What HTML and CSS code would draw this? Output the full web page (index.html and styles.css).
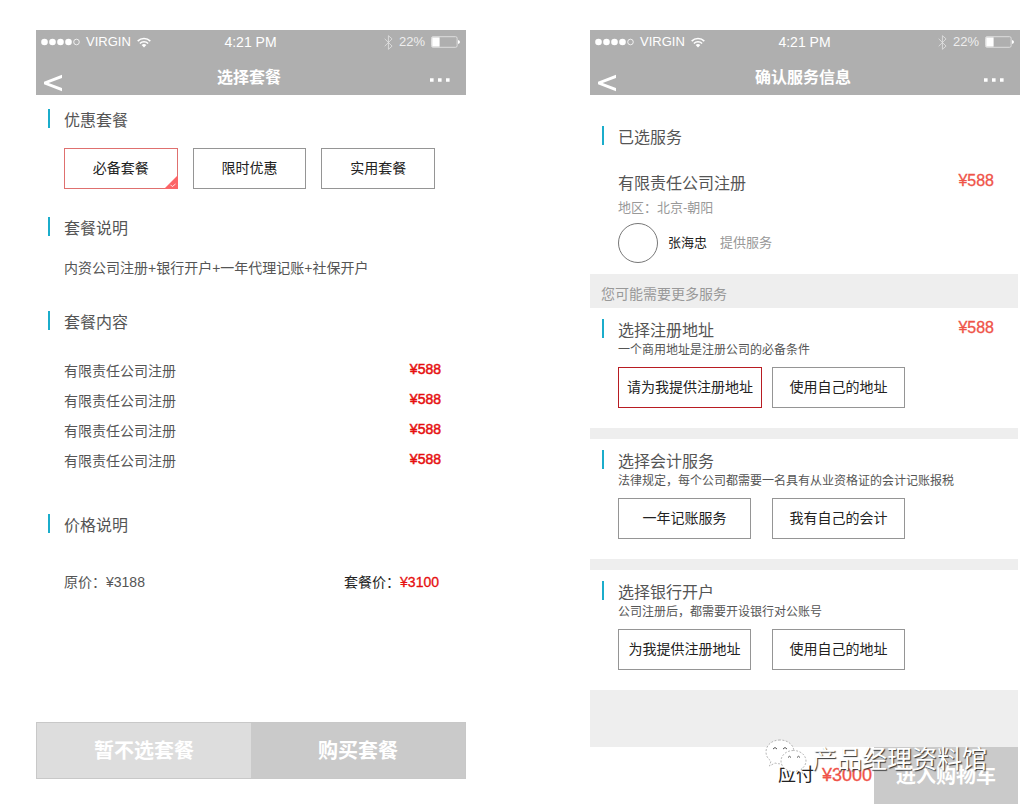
FILE: index.html
```html
<!DOCTYPE html>
<html lang="zh-CN">
<head>
  <meta charset="UTF-8" />
  <meta name="viewport" content="width=device-width, initial-scale=1.0" />
  <title>选择套餐</title>
  <link rel="stylesheet" href="styles.css">
</head>
<body>
<svg class="sprite" aria-hidden="true">
  <symbol id="signal" viewBox="0 0 39 8">
    <circle cx="3.5" cy="4" r="3.3" fill="#fff"/>
    <circle cx="11.5" cy="4" r="3.3" fill="#fff"/>
    <circle cx="19.5" cy="4" r="3.3" fill="#fff"/>
    <circle cx="27.5" cy="4" r="3.3" fill="#fff"/>
    <circle cx="35.5" cy="4" r="2.8" fill="none" stroke="#fff" stroke-width="0.8"/>
  </symbol>
  <symbol id="wifi" viewBox="0 0 14 11">
    <path d="M0.7 4.100a9 9 0 0 1 12.600 0M2.900 6.500a5.800 5.800 0 0 1 8.200 0" fill="none" stroke="#fff" stroke-width="1.6"/>
    <path d="M4.600 8.100a3.400 3.400 0 0 1 4.800 0L7 10.600z" fill="#fff"/>
  </symbol>
  <symbol id="bluetooth" viewBox="0 0 9 15">
    <path d="M0.7 3.8l7.4 7.3-3.7 3.2V0.7l3.7 3.2-7.4 7.3" fill="none" stroke="#e4e4e4" stroke-width="0.8"/>
  </symbol>
  <symbol id="battery" viewBox="0 0 29 12">
    <rect x="0.5" y="0.7" width="25.6" height="10.6" rx="1.5" fill="none" stroke="#ddd"/>
    <rect x="1.2" y="1.4" width="7.4" height="9.2" fill="#fff"/>
    <path d="M27 4q2 .4 2 2t-2 2z" fill="#fff"/>
  </symbol>
  <symbol id="back" viewBox="0 0 20 24">
    <path d="M19 3.800v3.200L5.600 12 19 17v3.200L1 13.300v-2.600z" fill="#fff"/>
  </symbol>
  <symbol id="more" viewBox="0 0 20 30">
    <path d="M0 13.2h3.6v3.6H0zM8 13.2h3.6v3.6H8zM16 13.2h3.6v3.6H16z" fill="#fff"/>
  </symbol>
</svg>

<main class="screens">
  <section class="screen">
    <header class="topbar">
      <div class="status">
        <span class="carrier">
          <svg width="39" height="8"><use href="#signal"/></svg>
          VIRGIN
          <svg width="14" height="11"><use href="#wifi"/></svg>
        </span>
        <span class="time">4:21 PM</span>
        <span class="power">
          <svg width="9" height="15"><use href="#bluetooth"/></svg>
          22%
          <svg width="29" height="12"><use href="#battery"/></svg>
        </span>
      </div>
      <nav class="nav">
        <button class="nav-back" aria-label="返回"><svg width="20" height="24"><use href="#back"/></svg></button>
        <h1>选择套餐</h1>
        <button class="nav-more" aria-label="更多"><svg width="20" height="30"><use href="#more"/></svg></button>
      </nav>
    </header>

    <div class="plan">
      <h2 class="heading">优惠套餐</h2>
      <div class="plan-options">
        <button class="option picked">必备套餐
          <svg class="corner" width="14" height="14" viewBox="0 0 14 14">
            <path d="M14 0v14H0z" fill="#fb6567"/>
            <path d="M6.5 9.8l1.8 1.8 3.2-2.6" fill="none" stroke="#fff" stroke-width="0.8"/>
          </svg>
        </button>
        <button class="option">限时优惠</button>
        <button class="option">实用套餐</button>
      </div>

      <h2 class="heading">套餐说明</h2>
      <p class="plan-text">内资公司注册+银行开户+一年代理记账+社保开户</p>

      <h2 class="heading">套餐内容</h2>
      <ul class="plan-items">
        <li>有限责任公司注册 <b>¥588</b></li>
        <li>有限责任公司注册 <b>¥588</b></li>
        <li>有限责任公司注册 <b>¥588</b></li>
        <li>有限责任公司注册 <b>¥588</b></li>
      </ul>

      <h2 class="heading">价格说明</h2>
      <div class="plan-total">
        <span>原价：¥3188</span>
        <span class="sale">套餐价：<em>¥3100</em></span>
      </div>
    </div>

    <footer class="plan-footer">
      <button class="skip">暂不选套餐</button>
      <button class="buy">购买套餐</button>
    </footer>
  </section>

  <section class="screen">
    <header class="topbar">
      <div class="status">
        <span class="carrier">
          <svg width="39" height="8"><use href="#signal"/></svg>
          VIRGIN
          <svg width="14" height="11"><use href="#wifi"/></svg>
        </span>
        <span class="time">4:21 PM</span>
        <span class="power">
          <svg width="9" height="15"><use href="#bluetooth"/></svg>
          22%
          <svg width="29" height="12"><use href="#battery"/></svg>
        </span>
      </div>
      <nav class="nav">
        <button class="nav-back" aria-label="返回"><svg width="20" height="24"><use href="#back"/></svg></button>
        <h1>确认服务信息</h1>
        <button class="nav-more" aria-label="更多"><svg width="20" height="30"><use href="#more"/></svg></button>
      </nav>
    </header>

    <div class="confirm">
      <section class="chosen">
        <h2 class="heading">已选服务</h2>
        <div class="chosen-row">
          <h3>有限责任公司注册</h3>
          <span class="price">¥588</span>
        </div>
        <p class="area">地区：北京-朝阳</p>
        <div class="provider">
          <span class="avatar"></span>
          <span class="name">张海忠</span>
          <span>提供服务</span>
        </div>
      </section>

      <p class="more-title">您可能需要更多服务</p>

      <section class="service">
        <div class="service-head">
          <h2 class="heading">选择注册地址</h2>
          <span class="price">¥588</span>
        </div>
        <p class="desc">一个商用地址是注册公司的必备条件</p>
        <div class="service-options">
          <button class="option active">请为我提供注册地址</button>
          <button class="option">使用自己的地址</button>
        </div>
      </section>

      <section class="service">
        <h2 class="heading">选择会计服务</h2>
        <p class="desc">法律规定，每个公司都需要一名具有从业资格证的会计记账报税</p>
        <div class="service-options">
          <button class="option">一年记账服务</button>
          <button class="option">我有自己的会计</button>
        </div>
      </section>

      <section class="service">
        <h2 class="heading">选择银行开户</h2>
        <p class="desc">公司注册后，都需要开设银行对公账号</p>
        <div class="service-options">
          <button class="option">为我提供注册地址</button>
          <button class="option">使用自己的地址</button>
        </div>
      </section>

      <div class="spacer"></div>

      <footer class="pay">
        <span class="pay-label">应付</span>
        <span class="pay-sum">¥3000</span>
        <button class="cart">进入购物车</button>
        <div class="watermark">
          <svg width="42" height="36" viewBox="0 0 42 36">
            <g fill="#fff" stroke="#999" stroke-width="0.7" stroke-dasharray="2 1.5">
              <path d="M15 1C7 1 1 6.200 1 13c0 4 2 7 5 9l-1.500 5 5.500-3c2 .6 3.500.8 5 .8 8 0 14-5 14-11.800S23 1 15 1z"/>
              <path d="M28.500 11.500c-7 0-12.500 4.600-12.500 10.500s5.500 10.500 12.500 10.500c1.500 0 3-.2 4.300-.7l4.700 2.700-1.300-4.300c2.900-2 4.800-4.900 4.800-8.200 0-5.900-5.600-10.500-12.500-10.500z"/>
            </g>
            <path d="M8 10q2-3 4 0M18 10q2-3 4 0M23 18.500q1.500-2.500 3 0M32 18.500q1.500-2.500 3 0" fill="none" stroke="#555"/>
          </svg>
          <span>产品经理资料馆</span>
        </div>
      </footer>
    </div>
  </section>
</main>
</body>
</html>
```

FILE: styles.css
```css
* {
  box-sizing: border-box;
}
body {
  margin: 0;
  background: #fff;
  color: #555;
  font-family: "Liberation Sans", "Noto Sans CJK SC", sans-serif;
  font-size: 14px;
  line-height: 22px;
}
h1, h2, h3, p, ul {
  margin: 0;
  padding: 0;
  font-weight: normal;
}
button {
  margin: 0;
  padding: 0;
  border: none;
  background: none;
  font-family: inherit;
  cursor: pointer;
}
.sprite {
  display: none;
}
.screens {
  display: grid;
  grid-template-columns: 1fr 1fr;
  gap: 124px;
  padding: 30px 0 0 36px;
}

/* top bar */
.topbar {
  background: #afafaf;
  color: #fff;
}
.status, .nav {
  display: grid;
  grid-template-columns: 1fr auto 1fr;
}
.status {
  align-items: center;
  height: 24px;
  padding: 0 6px 0 5px;
  font-size: 13px;
}
.carrier, .power {
  display: flex;
  align-items: center;
  gap: 6px;
}
.power {
  justify-content: flex-end;
  color: #eee;
}
.time {
  font-size: 14px;
}
.nav {
  padding: 6px 11px 0 7px;
  align-items: end;
}
.nav h1 {
  font-size: 16px;
  font-weight: bold;
  line-height: 35px;
}
.nav svg {
  display: block;
}
.nav-back {
  justify-self: start;
}
.nav-more {
  justify-self: end;
  padding-right: 5px;
}

/* shared pieces */
.heading {
  position: relative;
  font-size: 16px;
  line-height: 24px;
}
.heading::before {
  content: "";
  position: absolute;
  left: -16px;
  top: 0;
  width: 2px;
  height: 19px;
  background: #1badcb;
}
.option {
  position: relative;
  height: 41px;
  padding: 0 8px 4px;
  border: 1px solid #959595;
  background: #fff;
  color: #222;
  font-size: 14px;
}
.option.picked {
  border-color: #df706f;
}
.option.active {
  border-color: #b81c22;
}
.corner {
  position: absolute;
  right: -1px;
  bottom: -1px;
}
.price {
  color: #ef5348;
  font-size: 16px;
  line-height: 18px;
  -webkit-text-stroke: 0.3px;
}

/* choose a plan */
.plan {
  padding: 14px 25px 0 28px;
}
.plan-options {
  display: grid;
  grid-template-columns: repeat(3, 1fr);
  gap: 15px;
  margin: 15px 6px 28px 0;
}
.plan-text {
  margin: 16px 0 32px;
}
.plan-items {
  margin: 21px 0 38px;
  list-style: none;
}
.plan-items li {
  display: flex;
  justify-content: space-between;
  line-height: 30px;
}
.plan-items b {
  color: #e60f0f;
  font-weight: normal;
  line-height: 26px;
  -webkit-text-stroke: 0.5px;
}
.plan-total {
  display: flex;
  justify-content: space-between;
  margin: 33px 2px 0 0;
}
.sale {
  color: #222;
}
.sale em {
  color: #e60f0f;
  font-style: normal;
  -webkit-text-stroke: 0.3px;
}
.plan-footer {
  display: grid;
  grid-template-columns: 1fr 1fr;
  height: 57px;
  margin-top: 129px;
  border: 1px solid #c8c8c8;
}
.plan-footer button {
  padding-bottom: 2px;
  color: #fff;
  font-size: 20px;
  font-weight: bold;
}
.skip {
  background: #ddd;
}
.buy {
  background: #cacaca;
}

/* confirm the order */
.confirm {
  margin-right: 2px;
}
.chosen {
  padding: 31px 24px 11px 28px;
}
.chosen-row, .service-head {
  display: flex;
  justify-content: space-between;
}
.chosen-row {
  margin-top: 22px;
}
.chosen-row h3 {
  font-size: 16px;
  line-height: 24px;
}
.area {
  margin: 1px 0 4px;
  color: #999;
  font-size: 13px;
}
.provider {
  display: flex;
  align-items: center;
  color: #999;
  font-size: 13px;
}
.avatar {
  width: 40px;
  height: 40px;
  border: 1px solid #777;
  border-radius: 50%;
}
.name {
  margin: 0 13px 0 10px;
  color: #222;
}
.more-title {
  padding: 9px 11px 3px;
  background: #eee;
  color: #999;
}
.service {
  padding: 11px 24px 20px 28px;
}
.service + .service {
  border-top: 11px solid #eee;
}
.desc {
  font-size: 12px;
  line-height: 14px;
}
.service-options {
  display: grid;
  grid-template-columns: 144px 133px;
  gap: 10px;
  margin-top: 10px;
}
.service-options .option {
  justify-self: start;
  min-width: 133px;
}
.spacer {
  height: 57px;
  background: #eee;
}
.pay {
  position: relative;
  display: flex;
  justify-content: flex-end;
  height: 57px;
  line-height: 57px;
  font-size: 18px;
}
.pay-label {
  margin-right: 8px;
  color: #222;
}
.pay-sum {
  margin-right: 2px;
  color: #ef5348;
  -webkit-text-stroke: 0.3px;
}
.cart {
  padding-bottom: 2px;
  width: 144px;
  background: #cacaca;
  color: #fff;
  font-size: 20px;
  font-weight: bold;
}
.watermark {
  position: absolute;
  right: 31px;
  top: -8px;
  display: flex;
  gap: 5px;
  color: #fff;
  font-size: 25px;
  line-height: 40px;
  text-shadow: 1px 1px 1px #333;
  pointer-events: none;
}
```
